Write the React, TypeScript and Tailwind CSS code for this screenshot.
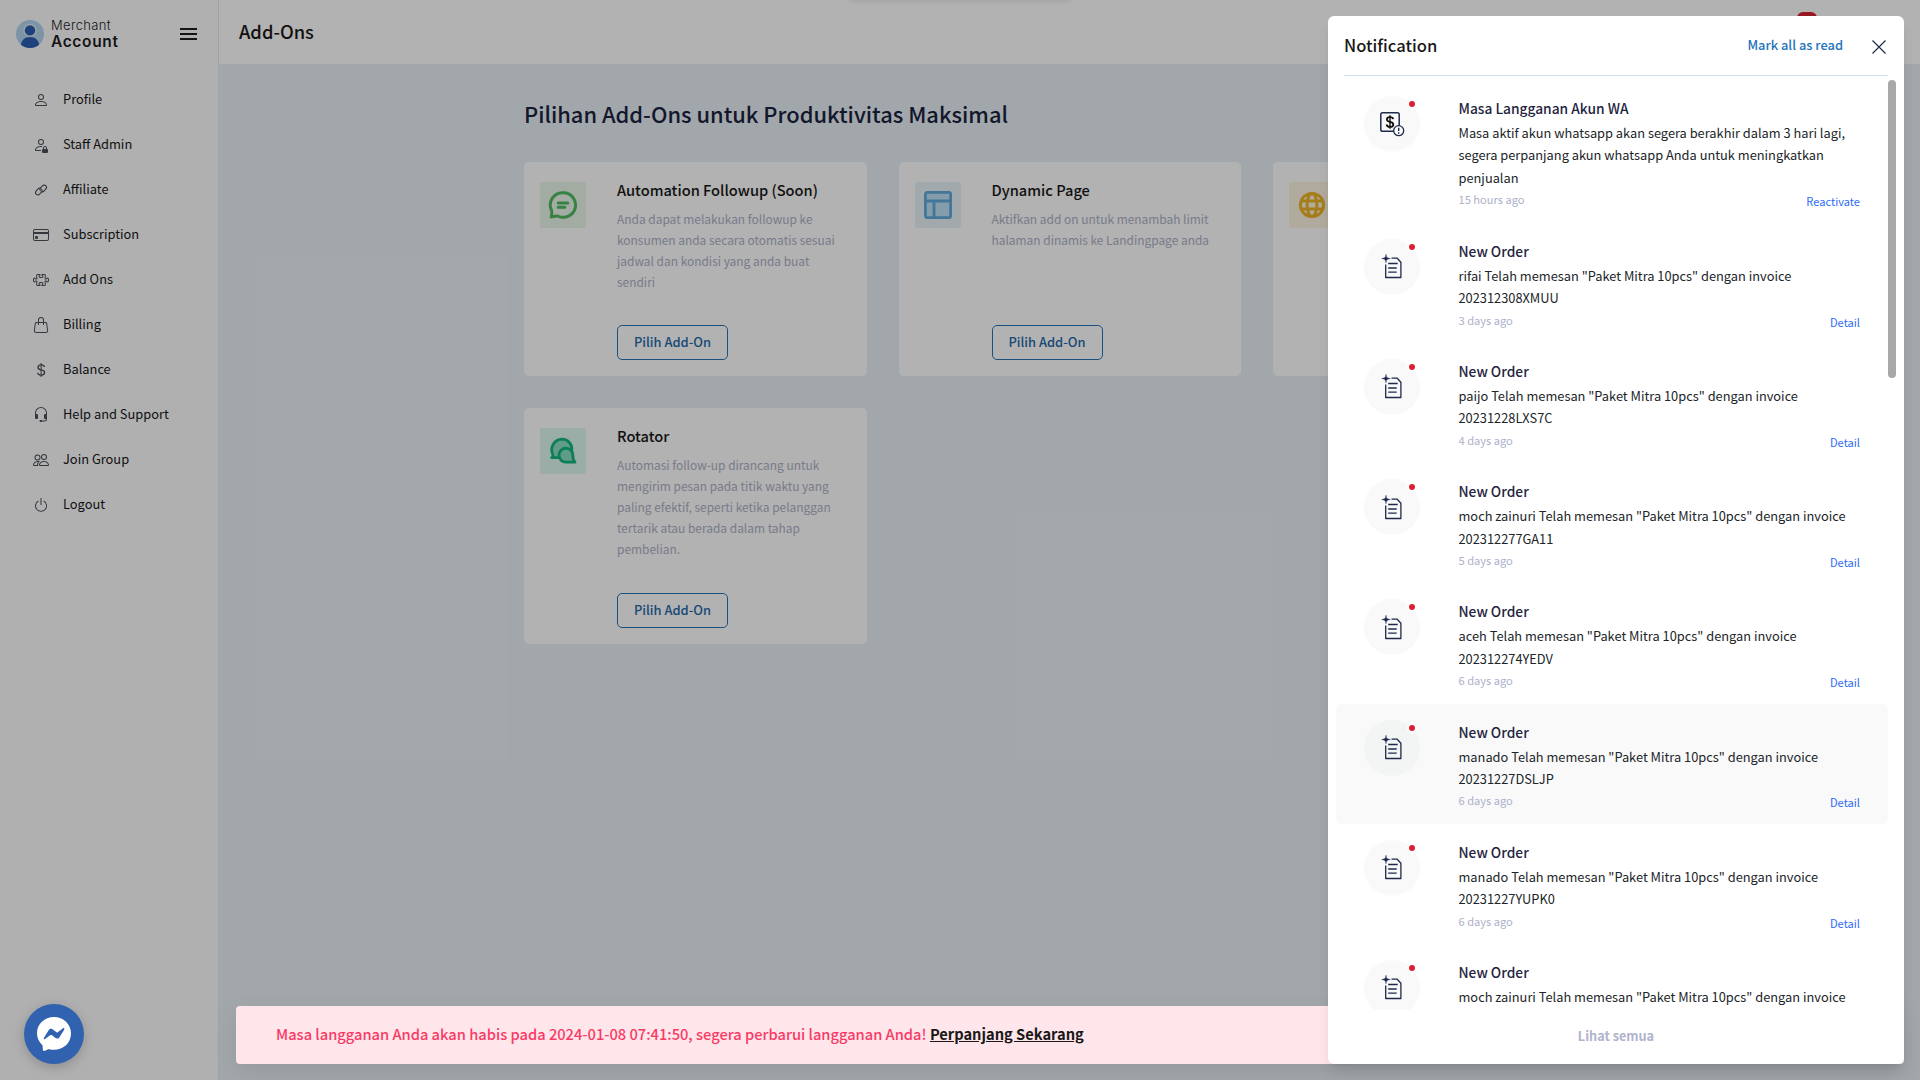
import React from "react";
import {
  BsPerson,
  BsPersonLock,
  BsCreditCard,
  BsPuzzle,
  BsHandbag,
  BsCurrencyDollar,
  BsHeadset,
  BsPeople,
  BsPower,
} from "react-icons/bs";

function LinkIcon() {
  return (
    <svg viewBox="0 0 16 16" width="16" height="16" fill="none" stroke="currentColor" strokeWidth="1.1" strokeLinecap="round">
      <path d="M8.600 9.800a2.600 2.600 0 0 0 2.600-.9l1.700-2a2.300 2.300 0 0 0-3.500-3L7.500 5.900a2.500 2.500 0 0 0-.2 2.900" />
      <path d="M7.400 6.200a2.600 2.600 0 0 0-2.600.9l-1.700 2a2.300 2.300 0 0 0 3.500 3l1.900-2a2.500 2.500 0 0 0 .2-2.900" />
    </svg>
  );
}

const menu = [
  { label: "Profile", icon: <BsPerson size={16} /> },
  { label: "Staff Admin", icon: <BsPersonLock size={16} /> },
  { label: "Affiliate", icon: <LinkIcon /> },
  { label: "Subscription", icon: <BsCreditCard size={16} /> },
  { label: "Add Ons", icon: <BsPuzzle size={16} /> },
  { label: "Billing", icon: <BsHandbag size={16} /> },
  { label: "Balance", icon: <BsCurrencyDollar size={16} /> },
  { label: "Help and Support", icon: <BsHeadset size={16} /> },
  { label: "Join Group", icon: <BsPeople size={16} /> },
  { label: "Logout", icon: <BsPower size={16} /> },
];

function Sidebar() {
  return (
    <aside className="flex h-full w-[219px] shrink-0 flex-col border-r border-[#e6e8ea] bg-[#fdfdfd]">
      <div className="flex h-16 items-center pt-1 pl-4 pr-[21px]">
        <svg width="28" height="28" viewBox="0 0 28 28">
          <defs>
            <clipPath id="avatar">
              <circle cx="14" cy="14" r="14" />
            </clipPath>
          </defs>
          <circle cx="14" cy="14" r="14" fill="#b2d5ee" />
          <g clipPath="url(#avatar)">
            <circle cx="14" cy="10.4" r="6.6" fill="#dce9f3" />
            <circle cx="14" cy="10.4" r="5.2" fill="#2a5db0" />
            <path d="M4.5 28C4.5 20 9 17 14 17s9.500 3 9.500 11z" fill="#2a5db0" />
          </g>
        </svg>
        <div className="ml-[7px] flex flex-col font-['Inter',sans-serif] text-[#1e1e1e]">
          <span className="mt-[-2px] text-[13px] leading-4 font-light tracking-[0.35px]">Merchant</span>
          <span className="text-[15.500px] leading-[17px] font-semibold tracking-[0.65px]">Account</span>
        </div>
        <div className="ml-auto flex flex-col gap-[3px]">
          <span className="h-0.5 w-[17px] bg-[#1e1e1e]" />
          <span className="h-0.5 w-[17px] bg-[#1e1e1e]" />
          <span className="h-0.5 w-[17px] bg-[#1e1e1e]" />
        </div>
      </div>
      <nav className="mt-3 flex flex-col text-[#181818]">
        {menu.map((m) => (
          <div key={m.label} className="flex h-[45px] items-center pl-[33px]">
            <span className="mt-0.5 flex text-[#4b5058]">{m.icon}</span>
            <span className="ml-[14px] text-[12.850px] leading-5">{m.label}</span>
          </div>
        ))}
      </nav>
    </aside>
  );
}

function ChatIcon() {
  return (
    <svg width="30" height="30" viewBox="0 0 30 30" fill="none" stroke="#50b95f" strokeLinecap="round" strokeLinejoin="round">
      <path d="M15 2.700a12.300 12.300 0 1 1-5.200 23.300C7.500 25.500 5 26.800 3.200 27c.6-2.200.900-4.600.2-6.900A12.300 12.300 0 0 1 15 2.700z" strokeWidth="3" />
      <path d="M10.200 13h9.600M10.200 17.200h6.600" strokeWidth="3" />
    </svg>
  );
}

function LayoutIcon() {
  return (
    <svg width="30" height="30" viewBox="0 0 30 30" fill="none" stroke="#61a9da" strokeWidth="2.800">
      <rect x="2.400" y="2.400" width="25.200" height="25.200" rx="1.800" fill="#bfe0f5" />
      <path d="M2.300 11h25.400M11 11v16.700" />
    </svg>
  );
}

function GlobeIcon() {
  return (
    <svg width="30" height="30" viewBox="0 0 30 30" fill="none" stroke="#edb427" strokeWidth="3">
      <circle cx="15" cy="15" r="11.600" />
      <ellipse cx="15" cy="15" rx="4.900" ry="11.600" />
      <path d="M4.200 11.100h21.600M4.200 18.900h21.600" />
    </svg>
  );
}

function RotatorIcon() {
  return (
    <svg width="30" height="30" viewBox="0 0 30 30" fill="#8ce0c4" stroke="#12b582" strokeWidth="2.800" strokeLinecap="round" strokeLinejoin="round">
      <path d="M14 3.200a9.800 9.800 0 0 1 9.800 9.800v8.700H3.800c1.200-1 1.400-2 1-3.400A10.500 10.500 0 0 1 14 3.200z" />
      <path d="M18 12.200a7 7 0 0 1 6.800 7c0 3 .2 5 2.200 7h-9a7 7 0 0 1 0-14z" />
    </svg>
  );
}

function AddOnCard({
  icon,
  tint,
  title,
  lines,
  className,
}: {
  icon: React.ReactNode;
  tint: string;
  title: string;
  lines: string[];
  className: string;
}) {
  return (
    <div className={`flex rounded-[5px] bg-white px-4 pt-5 pb-4 ${className}`}>
      <div className={`flex size-[46px] shrink-0 items-center justify-center rounded-[3px] ${tint}`}>{icon}</div>
      <div className="ml-[31px] flex flex-col items-start">
        <h3 className="mt-[-2px] text-[14.650px] leading-5 font-medium whitespace-nowrap text-[#181818]">{title}</h3>
        <div className="mt-[9.400px] text-[11.930px] leading-[20.900px] whitespace-nowrap text-[#acb1c6]">
          {lines.map((l) => (
            <div key={l}>{l}</div>
          ))}
        </div>
        <button className="mt-auto h-[35px] w-[111px] rounded-[5px] border border-[#2575b8] pb-0.5 text-[12.900px] font-medium whitespace-nowrap text-[#2569a8]">
          Pilih Add-On
        </button>
      </div>
    </div>
  );
}

function OrderIcon() {
  return (
    <svg width="20" height="25" viewBox="0 0 20 25" fill="none" stroke="#1f2b4d" strokeWidth="1.300" strokeLinejoin="round" className="overflow-visible">
      <path d="M4 .2c.4 3.200 1 3.800 4.300 4.300-3.300.5-3.900 1.100-4.300 4.300-.4-3.200-1-3.800-4.300-4.300C3 4 3.600 3.400 4 .2z" fill="#1f2b4d" strokeWidth=".4" />
      <path d="M9.500 4.200h5.700l3.700 4v15.300H3.700V10.500" />
      <path d="M6.200 9.500h9.500M6.200 14h8.500M6.200 18.200h8.500" />
    </svg>
  );
}

function BillIcon() {
  return (
    <svg width="24" height="24" viewBox="0 0 24 24" fill="none" stroke="#1f2b4d" strokeWidth="1.500" className="overflow-visible">
      <rect x=".8" y=".8" width="18.400" height="18.400" rx="1.800" />
      <path d="M13.200 7.200c-.2-1.400-1.400-2.100-3.200-2.100-1.900 0-3.100.9-3.100 2.300 0 3.400 6.400 1.600 6.400 5 0 1.500-1.200 2.500-3.300 2.500-2 0-3.200-.8-3.500-2.400" stroke="#111" strokeWidth="1.800" />
      <path d="M10 3.200v13.600" stroke="#111" strokeWidth="1.400" />
      <circle cx="18.700" cy="18.700" r="5" fill="#f9f9f9" strokeWidth="1.300" />
      <path d="M18.700 15.800v3.300M18.700 20.300v1.400" strokeWidth="1.400" />
    </svg>
  );
}

type Note = { title: string; lines: string[]; time: string; action: string; kind?: "bill"; active?: boolean };

const notes: Note[] = [
  {
    title: "Masa Langganan Akun WA",
    lines: [
      "Masa aktif akun whatsapp akan segera berakhir dalam 3 hari lagi,",
      "segera perpanjang akun whatsapp Anda untuk meningkatkan",
      "penjualan",
    ],
    time: "15 hours ago",
    action: "Reactivate",
    kind: "bill",
  },
  { title: "New Order", lines: ['rifai Telah memesan "Paket Mitra 10pcs" dengan invoice', "202312308XMUU"], time: "3 days ago", action: "Detail" },
  { title: "New Order", lines: ['paijo Telah memesan "Paket Mitra 10pcs" dengan invoice', "20231228LXS7C"], time: "4 days ago", action: "Detail" },
  { title: "New Order", lines: ['moch zainuri Telah memesan "Paket Mitra 10pcs" dengan invoice', "202312277GA11"], time: "5 days ago", action: "Detail" },
  { title: "New Order", lines: ['aceh Telah memesan "Paket Mitra 10pcs" dengan invoice', "202312274YEDV"], time: "6 days ago", action: "Detail" },
  { title: "New Order", lines: ['manado Telah memesan "Paket Mitra 10pcs" dengan invoice', "20231227DSLJP"], time: "6 days ago", action: "Detail", active: true },
  { title: "New Order", lines: ['manado Telah memesan "Paket Mitra 10pcs" dengan invoice', "20231227YUPK0"], time: "6 days ago", action: "Detail" },
  { title: "New Order", lines: ['moch zainuri Telah memesan "Paket Mitra 10pcs" dengan invoice'], time: "", action: "" },
];

function NotificationPanel() {
  return (
    <section className="absolute top-4 right-4 flex h-[1048px] w-[576px] flex-col rounded-md bg-white shadow-lg">
      <div className="mx-4 flex h-[60px] shrink-0 items-center border-b border-[#cde0f4]">
        <h2 className="text-[16.600px] font-medium text-[#181818]">Notification</h2>
        <button className="mr-[29px] mb-px ml-auto text-[12.850px] font-medium text-[#1f74bd]">Mark all as read</button>
        <svg width="14" height="14" viewBox="0 0 14 14" className="mt-0.5 mr-[2px]" stroke="#1f2b4d" strokeWidth="1.200">
          <path d="M.5.5l13 13M13.500.5l-13 13" />
        </svg>
      </div>
      <div className="mt-1 flex h-[930px] shrink-0 overflow-hidden px-2">
        <div className="flex w-[552px] flex-col">
          {notes.map((n, i) => (
            <article
              key={i}
              className={`flex shrink-0 rounded-md pt-4 pr-[28px] pl-[28px] ${n.kind ? "h-[142.800px]" : "h-[120.200px]"} ${n.active ? "bg-[#f9f9f9]" : ""}`}
            >
              <div
                className={`relative flex size-14 shrink-0 items-center justify-center rounded-full ${n.active ? "bg-[#f3f4f4]" : "bg-[#f9f9f9]"}`}
              >
                {n.kind ? <BillIcon /> : <OrderIcon />}
                <span className="absolute top-[3px] right-[3px] size-[10px] rounded-full border-2 border-white bg-[#dc2033]" />
              </div>
              <div className="ml-[38.500px] flex min-w-0 flex-1 flex-col whitespace-nowrap text-[#212529]">
                <h4 className="mt-px text-[13.750px] leading-[22px] font-medium text-[#1f2540]">{n.title}</h4>
                <div className="mt-[3px] text-[12.820px] leading-[22.400px]">
                  {n.lines.map((l) => (
                    <div key={l}>{l}</div>
                  ))}
                </div>
                <div className="flex justify-between text-[11.100px] leading-5 text-[#acb1cb]">
                  <span>{n.time}</span>
                  <span className="mt-0.5 text-[#2f6bf5]">{n.action}</span>
                </div>
              </div>
            </article>
          ))}
        </div>
        <div className="h-[298px] w-2 rounded-full bg-[#a8a8a8]" />
      </div>
      <div className="flex flex-1 items-center justify-center pb-[2px] text-[12.700px] font-bold text-[#b0b3cc]">Lihat semua</div>
    </section>
  );
}

export default function App() {
  return (
    <div className="relative h-[1080px] w-[1920px] overflow-hidden font-['Noto_Sans_CJK_SC',sans-serif]">
      <div className="flex h-full">
        <Sidebar />
        <div className="flex flex-1 flex-col bg-[#e8f0f5]">
          <header className="flex h-16 shrink-0 items-center bg-white pl-5">
            <h1 className="text-[18.300px] font-medium text-[#181818]">Add-Ons</h1>
          </header>
          <main className="ml-[305px] w-[1091.500px]">
            <h2 className="mt-[34px] text-[21.860px] leading-8 font-medium text-[#1b2340]">Pilihan Add-Ons untuk Produktivitas Maksimal</h2>
            <div className="mt-8 grid grid-cols-3 gap-8">
              <AddOnCard
                className="h-[214px]"
                icon={<ChatIcon />}
                tint="bg-[#e8f6ea]"
                title="Automation Followup (Soon)"
                lines={["Anda dapat melakukan followup ke", "konsumen anda secara otomatis sesuai", "jadwal dan kondisi yang anda buat", "sendiri"]}
              />
              <AddOnCard
                className="h-[214px]"
                icon={<LayoutIcon />}
                tint="bg-[#e8f2f8]"
                title="Dynamic Page"
                lines={["Aktifkan add on untuk menambah limit", "halaman dinamis ke Landingpage anda"]}
              />
              <AddOnCard className="h-[214px]" icon={<GlobeIcon />} tint="bg-[#fdf5e0]" title="" lines={[]} />
              <AddOnCard
                className="h-[236px]"
                icon={<RotatorIcon />}
                tint="bg-[#dff8ef]"
                title="Rotator"
                lines={[
                  "Automasi follow-up dirancang untuk",
                  "mengirim pesan pada titik waktu yang",
                  "paling efektif, seperti ketika pelanggan",
                  "tertarik atau berada dalam tahap",
                  "pembelian.",
                ]}
              />
            </div>
          </main>
        </div>
      </div>
      <span className="absolute top-3 left-[1797px] h-4 w-5 rounded-md bg-[#dc2033]" />
      <div className="absolute inset-0 bg-black/30" />
      <div className="absolute -top-2 left-[850px] h-2 w-[220px] rounded-lg shadow-[0_0_6px_rgba(0,0,0,0.15)]" />
      <div className="absolute top-[1006px] left-[236px] flex h-[58px] w-[1668px] items-center rounded bg-[#ffe6ea] pb-0.5 pl-10 text-[14.660px] font-medium whitespace-pre text-[#f83b66] shadow-[0_8px_24px_rgba(0,0,0,0.08)]">
        Masa langganan Anda akan habis pada 2024-01-08 07:41:50, segera perbarui langganan Anda!{" "}
        <span className="font-bold text-[#181818] underline">Perpanjang Sekarang</span>
      </div>
      <div className="absolute top-[1004px] left-6 flex size-[60px] items-center justify-center rounded-full bg-[#3062af] shadow-[0_3px_12px_rgba(0,0,0,0.2)]">
        <svg width="34" height="34" viewBox="0 0 34 34">
          <path d="M17 0C7.500 0 0 7 0 16.200c0 4.800 2 8.800 5.200 11.700.4.300.5.900.5 1.500l.1 3.200c0 1 1 1.700 2 1.200l3.400-1.500c.300-.1.700-.1 1-.1 1.500.4 3.100.6 4.800.6 9.500 0 17-7 17-16.300S26.500 0 17 0z" fill="#fff" />
          <path d="M6.800 21l5-8c.8-1.200 2.500-1.600 3.700-.7l4 3c.4.300.8.300 1.200 0l5.400-4c.7-.6 1.700.3 1.200 1.100l-5 8c-.8 1.200-2.500 1.600-3.700.7l-4-3c-.4-.3-.8-.3-1.200 0l-5.400 4c-.7.600-1.700-.3-1.200-1.100z" fill="#3062af" />
        </svg>
      </div>
      <NotificationPanel />
    </div>
  );
}
